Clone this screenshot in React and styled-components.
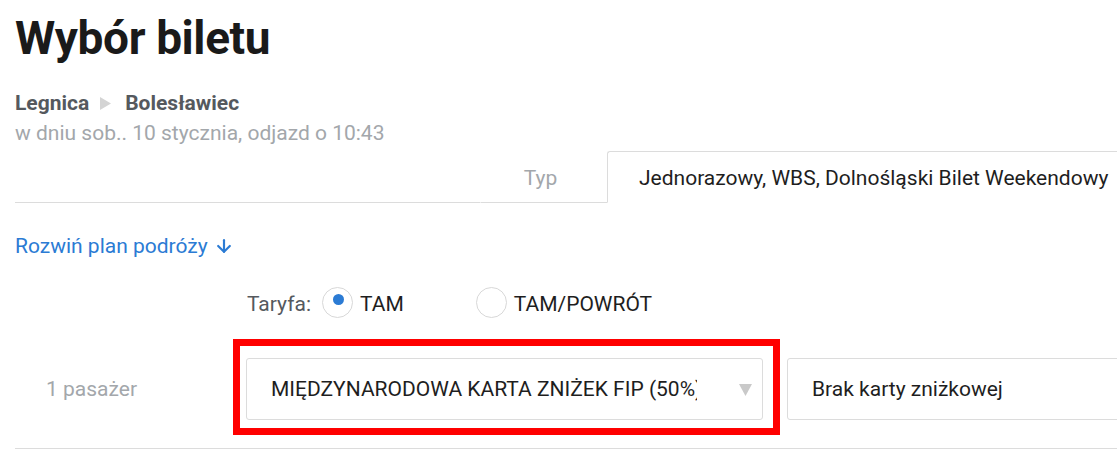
import React from "react";
import styled, { createGlobalStyle } from "styled-components";
import { ArrowDown } from "lucide-react";

const GlobalStyle = createGlobalStyle`
  html, body {
    margin: 0;
    padding: 0;
    background: #fff;
    overflow: hidden;
  }
  body {
    font-family: Roboto, "Liberation Sans", Arial, sans-serif;
    color: #222;
  }
`;

const Page = styled.div`
  width: 1140px;
  padding-left: 15px;
  box-sizing: border-box;
`;

const Title = styled.h1`
  margin: 15px 0 0 0;
  font-size: 46px;
  line-height: 46px;
  font-weight: 700;
  color: #1a1a1a;
  letter-spacing: -0.4px;
`;

const Route = styled.div`
  margin-top: 28px;
  display: flex;
  align-items: center;
  gap: 11px;
  font-size: 21px;
  line-height: 28px;
  font-weight: 700;
  color: #55595e;
`;

const RouteArrow = styled.svg`
  width: 11px;
  height: 13px;
  fill: #d4d4d4;
  margin-right: 3px;
`;

const When = styled.div`
  margin-top: 2px;
  font-size: 21px;
  line-height: 28px;
  color: #a3a7ab;
`;

const Tabs = styled.div`
  margin-top: 4px;
  display: flex;
  align-items: stretch;
`;

const TabSpacer = styled.div`
  width: 465px;
  border-bottom: 1px solid #dcdcdc;
`;

const Tab = styled.div`
  box-sizing: border-box;
  padding: 12px ${(p) => (p.$active ? "31px" : "7px")} 10px
    ${(p) => (p.$active ? "31px" : "0")};
  font-size: 21px;
  line-height: 28px;
  white-space: nowrap;
  border-top: 1px solid ${(p) => (p.$active ? "#dcdcdc" : "transparent")};
  border-left: 1px solid ${(p) => (p.$active ? "#dcdcdc" : "transparent")};
  border-bottom: 1px solid ${(p) => (p.$active ? "transparent" : "#dcdcdc")};
  border-top-left-radius: ${(p) => (p.$active ? "3px" : "0")};
  color: ${(p) => (p.$active ? "#1e1e1e" : "#a3a7ab")};
  width: ${(p) => (p.$active ? "auto" : "127px")};
  text-align: ${(p) => (p.$active ? "left" : "center")};
  flex: ${(p) => (p.$active ? "1" : "none")};
`;

const ExpandLink = styled.a`
  margin-top: 29px;
  display: flex;
  width: fit-content;
  align-items: center;
  gap: 6px;
  font-size: 21px;
  line-height: 28px;
  color: #2b7bd4;
  text-decoration: none;
  cursor: pointer;
`;

const Grid = styled.div`
  display: grid;
  grid-template-columns: 207px 517px 1fr;
  column-gap: 24px;
`;

const FareRow = styled(Grid)`
  margin-top: 27px;
`;

const FareOptions = styled.div`
  grid-column: 2 / 4;
  display: flex;
  align-items: flex-end;
  padding-left: 1px;
`;

const FareLabel = styled.span`
  font-size: 21px;
  line-height: 28px;
  color: #55595e;
  margin-right: 11px;
`;

const Option = styled.label`
  display: inline-flex;
  align-items: flex-end;
  gap: 7px;
  margin-right: ${(p) => p.$gap || 0}px;
  font-size: 21px;
  line-height: 28px;
  color: #1e1e1e;
  cursor: pointer;
`;

const Radio = styled.span`
  position: relative;
  box-sizing: border-box;
  width: 31px;
  height: 31px;
  border-radius: 50%;
  border: 1px solid #d8d8d8;
  background: #fff;
  flex: none;

  &::after {
    content: "";
    display: ${(p) => (p.$checked ? "block" : "none")};
    position: absolute;
    left: 10px;
    top: 6px;
    width: 11px;
    height: 11px;
    border-radius: 50%;
    background: #2b7bd4;
  }
`;

const PassengerRow = styled(Grid)`
  margin-top: 40px;
  padding-bottom: 28px;
  border-bottom: 1px solid #dcdcdc;
  align-items: center;
`;

const PassengerLabel = styled.div`
  padding-left: 31px;
  font-size: 21px;
  line-height: 28px;
  color: #a3a7ab;
`;

const Highlight = styled.div`
  position: relative;
`;

const RedFrame = styled.div`
  position: absolute;
  left: -13px;
  top: -19px;
  right: -17px;
  bottom: -15px;
  border: 7px solid #ff0000;
  pointer-events: none;
`;

const Select = styled.div`
  box-sizing: border-box;
  height: 62px;
  display: flex;
  align-items: center;
  justify-content: space-between;
  padding: 0 ${(p) => (p.$withArrow ? "10px" : "24px")} 0 24px;
  border: 1px solid #dcdcdc;
  border-radius: 3px;
  background: #fff;
  font-size: 21px;
  line-height: 28px;
  color: #1e1e1e;
  white-space: nowrap;
  overflow: hidden;
`;

const SelectText = styled.span`
  overflow: hidden;
  max-width: 426px;
  white-space: nowrap;
`;

const Caret = styled.svg`
  width: 13px;
  height: 13px;
  fill: #c9c9c9;
  flex: none;
`;

export default function App() {
  return (
    <>
      <GlobalStyle />
      <Page>
        <Title>Wybór biletu</Title>
        <Route>
          <span>Legnica</span>
          <RouteArrow viewBox="0 0 11 13">
            <polygon points="0,0 11,6.5 0,13" />
          </RouteArrow>
          <span>Bolesławiec</span>
        </Route>
        <When>w dniu sob.. 10 stycznia, odjazd o 10:43</When>
        <Tabs>
          <TabSpacer />
          <Tab>Typ</Tab>
          <Tab $active>Jednorazowy, WBS, Dolnośląski Bilet Weekendowy</Tab>
        </Tabs>
        <ExpandLink>
          Rozwiń plan podróży
          <ArrowDown size={20} strokeWidth={2.6} />
        </ExpandLink>
        <FareRow>
          <span />
          <FareOptions>
            <FareLabel>Taryfa:</FareLabel>
            <Option $gap={72}>
              <Radio $checked />
              TAM
            </Option>
            <Option>
              <Radio />
              TAM/POWRÓT
            </Option>
          </FareOptions>
        </FareRow>
        <PassengerRow>
          <PassengerLabel>1 pasażer</PassengerLabel>
          <Highlight>
            <Select $withArrow>
              <SelectText>MIĘDZYNARODOWA KARTA ZNIŻEK FIP (50%)</SelectText>
              <Caret viewBox="0 0 13 13">
                <polygon points="0,1 13,1 6.5,13" />
              </Caret>
            </Select>
            <RedFrame />
          </Highlight>
          <Select>Brak karty zniżkowej</Select>
        </PassengerRow>
      </Page>
    </>
  );
}
